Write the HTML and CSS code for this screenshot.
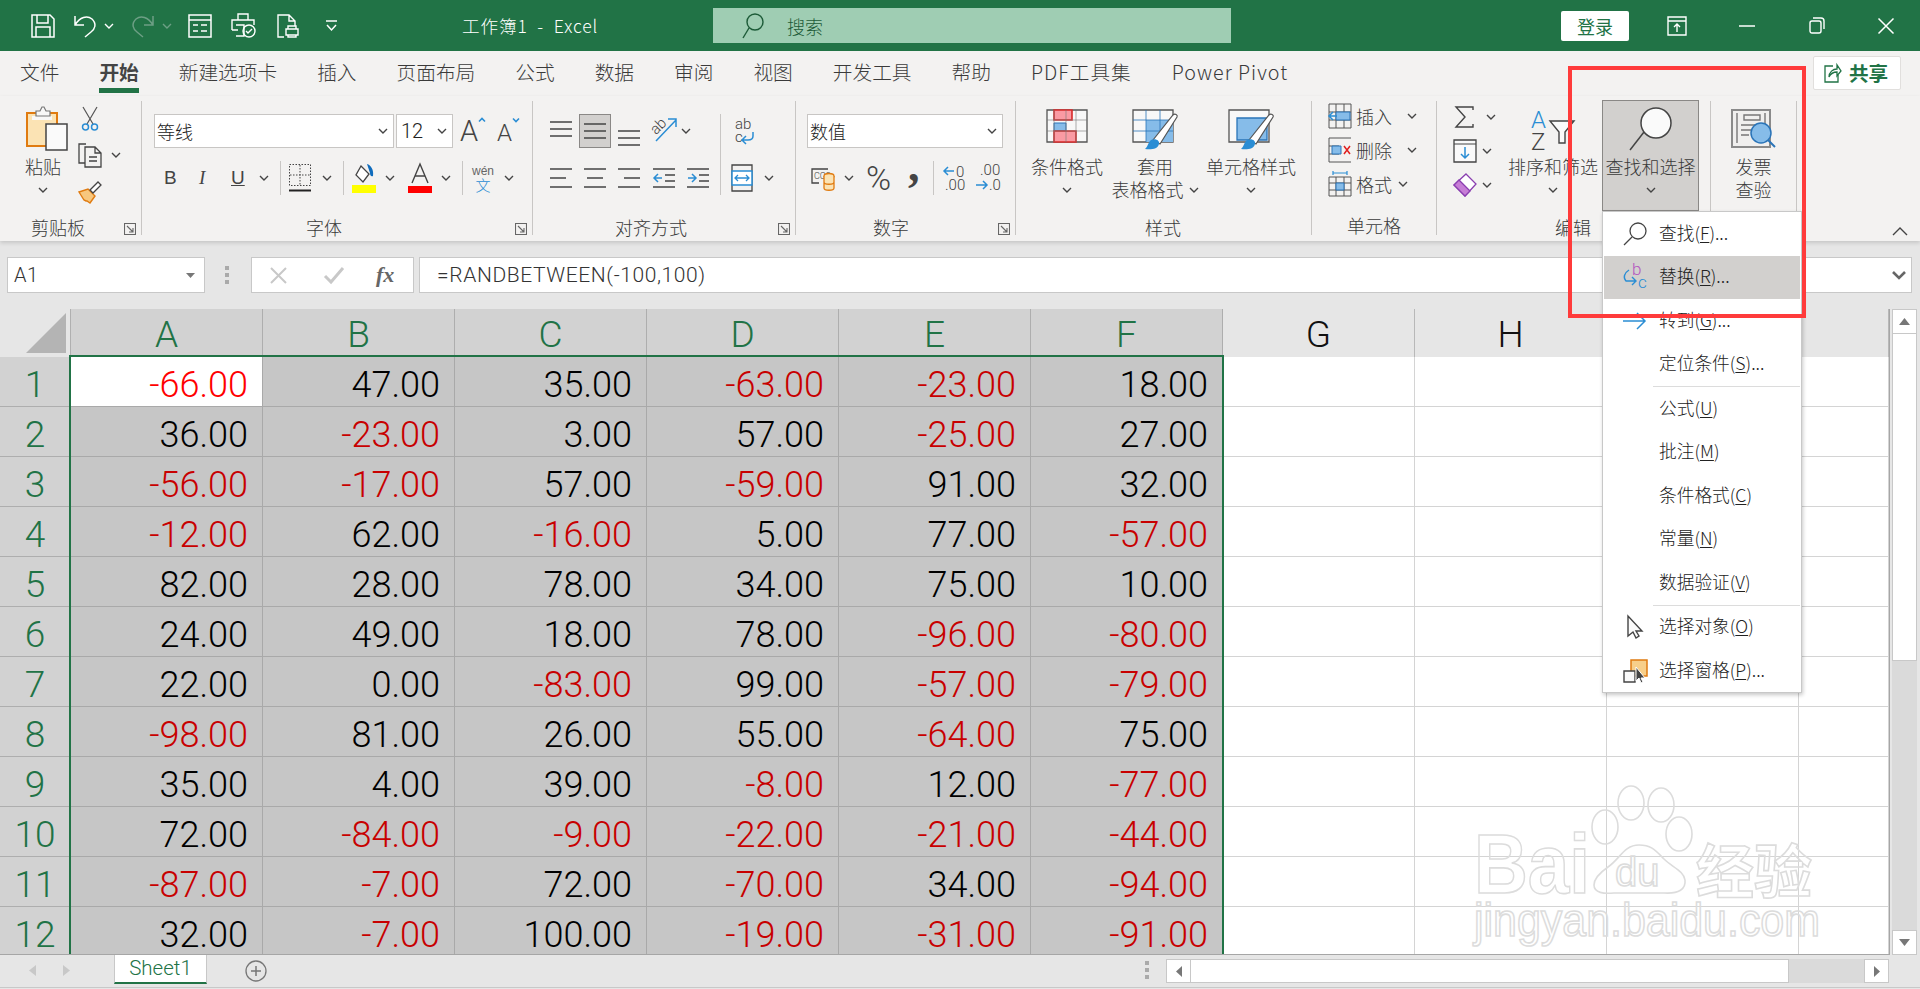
FILE: index.html
```html
<!DOCTYPE html>
<html lang="zh-CN">
<head>
<meta charset="utf-8">
<title>工作簿1 - Excel</title>
<link rel="stylesheet" href="styles.css">
</head>
<body>
<svg class="defs" width="0" height="0"><defs>
<symbol id="chev" viewBox="0 0 10 6"><path d="M1 1l4 4 4-4" fill="none" stroke="currentColor" stroke-width="1.4"/></symbol>
<symbol id="launch" viewBox="0 0 12 12"><path d="M.5 11.5V.5h11v11zM3 3l6 6M9 5v4H5" fill="none" stroke="#666" stroke-width="1.1"/></symbol>
</defs></svg>

<header class="titlebar">
  <div class="qat">
    <svg class="q-save" width="24" height="24" viewBox="0 0 24 24" fill="none" stroke="#fff" stroke-width="1.5"><path d="M1 1h18l4 4v18H1zM6 1v8h11V1M5 23V13h14v10"/></svg>
    <svg class="q-undo" width="24" height="24" viewBox="0 0 24 24" fill="none" stroke="#fff" stroke-width="1.5"><path d="M2 2v9h9M2 11C7 3 14 1 19 5c5 5 3 10-1 13l-6 5"/></svg>
    <svg class="c-w q-c1"><use href="#chev"/></svg>
    <svg class="q-redo" width="24" height="24" viewBox="0 0 24 24" fill="none" stroke="#6d9f85" stroke-width="1.5"><path d="M22 2v9h-9M22 11C17 3 10 1 5 5c-5 5-3 10 1 13l6 5"/></svg>
    <svg class="c-d q-c2"><use href="#chev"/></svg>
    <svg class="q-form" width="24" height="24" viewBox="0 0 24 24" fill="none" stroke="#fff" stroke-width="1.5"><path d="M1 1h22v22H1zM1 6h22M5 11h5M13 11h6M5 17h5M13 17h6"/></svg>
    <svg class="q-print" width="25" height="25" viewBox="0 0 25 25" fill="none" stroke="#fff" stroke-width="1.4"><path d="M7 7V1h10v6M1 17V7h22v5M7 17H1M5 12h8v11H5M9 14v0"/><circle cx="18" cy="18" r="6"/><path d="M15 18l2 2 4-4"/></svg>
    <svg class="q-prev" width="22" height="24" viewBox="0 0 22 24" fill="none" stroke="#fff" stroke-width="1.4"><path d="M7 23H1V1h11l6 6v5M12 1v6h6M9 15h12v6H9zM11 15v-3h8v3M11 21v2h8v-2"/></svg>
    <svg class="q-cust" width="11" height="14" viewBox="0 0 11 14" fill="none" stroke="#fff" stroke-width="1.5"><path d="M0 2h11"/><path d="M1 6l4.500 5L10 6"/></svg>
  </div>
  <div class="doc-title">工作簿1&nbsp; -&nbsp; Excel</div>
  <div class="search">
    <svg width="22" height="26" viewBox="0 0 22 26" fill="none" stroke="#1d5b38" stroke-width="1.4"><circle cx="13" cy="9" r="8"/><path d="M7 15L1 25"/></svg>
    <span>搜索</span>
  </div>
  <button class="login">登录</button>
  <svg class="w-disp" width="20" height="20" viewBox="0 0 20 20" fill="none" stroke="#fff" stroke-width="1.4"><path d="M1 1h18v18H1zM1 5h18M10 16v-8M7 11l3-3 3 3"/></svg>
  <svg class="w-min" width="16" height="2" viewBox="0 0 16 2"><path d="M0 1h16" stroke="#fff" stroke-width="1.5"/></svg>
  <svg class="w-res" width="16" height="17" viewBox="0 0 16 17" fill="none" stroke="#fff" stroke-width="1.4"><rect x="1" y="4" width="11" height="12" rx="2"/><path d="M4 1h8c2 0 3 1 3 3v8"/></svg>
  <svg class="w-close" width="16" height="16" viewBox="0 0 16 16"><path d="M.5.500l15 15M15.500.500l-15 15" stroke="#fff" stroke-width="1.5"/></svg>
</header>

<nav class="tabs">
  <a>文件</a><a class="on">开始</a><a>新建选项卡</a><a>插入</a><a>页面布局</a><a>公式</a><a>数据</a><a>审阅</a><a>视图</a><a>开发工具</a><a>帮助</a><a class="latin">PDF工具集</a><a class="latin">Power Pivot</a>
  <button class="share">
    <svg width="18" height="20" viewBox="0 0 18 20" fill="none" stroke="#217346" stroke-width="1.3"><path d="M9 3H1v16h13v-7"/><path d="M5 14c0-5 4-8 8-8V2l4 6-4 5V9c-3 0-6 1-8 5z"/></svg>
    共享
  </button>
</nav>

<section class="ribbon">
  <div class="group g-clip">
    <div class="body clip-body">
      <div class="big paste">
        <svg class="paste-i" width="42" height="44" viewBox="0 0 42 44"><path d="M1 7h30v33H1z" fill="#fbe3b4" stroke="#e07b10" stroke-width="2"/><path d="M6 10h20v4H6z" fill="#f8f8f8"/><path d="M10 7V5h4l2-4h2l2 4h4v5H10z" fill="#f8f8f8" stroke="#777" stroke-width="1.200"/><path d="M20 18h21v26H20z" fill="#fafafa" stroke="#444" stroke-width="1.500"/></svg>
        <span>粘贴</span>
        <svg class="cv"><use href="#chev"/></svg>
      </div>
      <div class="clip-col">
        <svg class="cut" width="16" height="24" viewBox="0 0 16 24" fill="none"><path d="M1 0l10 17M15 0L5 17" stroke="#555" stroke-width="1.200"/><circle cx="3.500" cy="20" r="3" stroke="#2a8dd4" stroke-width="1.500"/><circle cx="12.500" cy="20" r="3" stroke="#2a8dd4" stroke-width="1.500"/></svg>
        <div class="copy-row"><svg width="24" height="24" viewBox="0 0 24 24" fill="none" stroke="#444" stroke-width="1.300"><path d="M8 1H1v19h6"/><path d="M7 4h10l6 6v14H7zM17 4v6h6M11 14h8M11 18h8"/></svg><svg class="cv copy-c"><use href="#chev"/></svg></div>
        <svg class="brush" width="24" height="22" viewBox="0 0 24 22"><path d="M1 11l9-3 7 7-5 7-3-2-1 0-2-1z" fill="#f7c77e" stroke="#e07b10" stroke-width="1.400"/><path d="M12 9l8-8 3 3-8 8z" fill="#fff" stroke="#444" stroke-width="1.300"/></svg>
      </div>
    </div>
    <div class="foot"><span class="lbl l-clip">剪贴板</span><svg class="launch"><use href="#launch"/></svg></div>
  </div>

  <div class="group g-font">
    <div class="body rows pad-font">
      <div class="row">
        <div class="combo font-name"><span>等线</span><svg class="cv"><use href="#chev"/></svg></div>
        <div class="combo font-size"><span>12</span><svg class="cv"><use href="#chev"/></svg></div>
        <div class="grow-a"><span class="a-big">A</span><svg width="8" height="5" viewBox="0 0 8 5" fill="none" stroke="#2a8dd4" stroke-width="1.600"><path d="M1 4.500l3-3 3 3"/></svg></div>
        <div class="shrink-a"><span class="a-small">A</span><svg width="8" height="5" viewBox="0 0 8 5" fill="none" stroke="#2a8dd4" stroke-width="1.600"><path d="M1 .5l3 3 3-3"/></svg></div>
      </div>
      <div class="row">
        <b class="t-b">B</b><i class="t-i">I</i><u class="t-u">U</u>
        <svg class="cv m15"><use href="#chev"/></svg>
        <span class="sep m11"></span>
        <svg class="m8" width="22" height="28" viewBox="0 0 22 28" fill="none"><path d="M.5.500h21v21H.5zM11 1v20M1 11h20" stroke="#444" stroke-dasharray="1.500 1.500"/><path d="M0 26.500h22" stroke="#222" stroke-width="2"/></svg>
        <svg class="cv m11"><use href="#chev"/></svg>
        <span class="sep m11"></span>
        <svg class="m8" width="24" height="30" viewBox="0 0 24 30"><path d="M9 3l8 8-6 8-7-7z" fill="#fff" stroke="#444" stroke-width="1.300"/><path d="M15 1c4 1 7 6 6 12-2 1-3-1-3-3z" fill="#0f6cbd"/><path d="M0 22h24v8H0z" fill="#ffff00"/></svg>
        <svg class="cv m9"><use href="#chev"/></svg>
        <svg class="m13" width="24" height="30" viewBox="0 0 24 30"><path d="M4 20L12 1l8 19M7 13h10" fill="none" stroke="#444" stroke-width="1.400"/><path d="M0 23h24v7H0z" fill="#ff0000"/></svg>
        <svg class="cv m9"><use href="#chev"/></svg>
        <span class="sep m11"></span>
        <div class="wen m9"><span class="w1">wén</span><span class="w2">文</span></div>
        <svg class="cv m10"><use href="#chev"/></svg>
      </div>
    </div>
    <div class="foot"><span class="lbl l-font">字体</span><svg class="launch"><use href="#launch"/></svg></div>
  </div>

  <div class="group g-align">
    <div class="body rows pad-align">
      <div class="row">
        <svg width="22" height="20" viewBox="0 0 22 20"><path d="M0 1h22M0 8h22M0 15h22" stroke="#444" stroke-width="1.500"/></svg>
        <div class="mid-btn m7"><svg width="22" height="20" viewBox="0 0 22 20"><path d="M0 3h22M0 10h22M0 17h22" stroke="#444" stroke-width="1.500"/></svg></div>
        <svg class="m7 down6" width="22" height="20" viewBox="0 0 22 20"><path d="M0 5h22M0 12h22M0 19h22" stroke="#444" stroke-width="1.500"/></svg>
        <svg class="m12" width="25" height="28" viewBox="0 0 25 28" fill="none"><path d="M4 24L24 3M16 2h8v8" stroke="#2a8dd4" stroke-width="1.500"/><text class="svgtxt" x="0" y="15" transform="rotate(-45 6 12)">ab</text></svg>
        <svg class="cv m4"><use href="#chev"/></svg>
        <span class="sep tall m29"></span>
        <svg class="m14" width="20" height="28" viewBox="0 0 20 28" fill="none"><text class="svgtxt" x="0" y="12">ab</text><text class="svgtxt" x="0" y="25">c</text><path d="M18 15v4c0 3-2 4-5 4H8M11 19l-4 4 4 4" stroke="#2a8dd4" stroke-width="1.500"/></svg>
      </div>
      <div class="row">
        <svg width="22" height="24" viewBox="0 0 22 24"><path d="M0 3h22M0 12h16M0 21h22" stroke="#444" stroke-width="1.500"/></svg>
        <svg class="m12" width="22" height="24" viewBox="0 0 22 24"><path d="M0 3h22M3 12h16M0 21h22" stroke="#444" stroke-width="1.500"/></svg>
        <svg class="m12" width="22" height="24" viewBox="0 0 22 24"><path d="M0 3h22M6 12h16M0 21h22" stroke="#444" stroke-width="1.500"/></svg>
        <svg class="m13" width="22" height="24" viewBox="0 0 22 24" fill="none"><path d="M0 3h22M12 9h10M12 15h10M0 21h22" stroke="#444" stroke-width="1.500"/><path d="M9 12H1M5 8l-4 4 4 4" stroke="#2a8dd4" stroke-width="1.500"/></svg>
        <svg class="m12" width="22" height="24" viewBox="0 0 22 24" fill="none"><path d="M0 3h22M12 9h10M12 15h10M0 21h22" stroke="#444" stroke-width="1.500"/><path d="M1 12h8M5 8l4 4-4 4" stroke="#2a8dd4" stroke-width="1.500"/></svg>
        <svg class="m22" width="22" height="28" viewBox="0 0 22 28" fill="none"><path d="M1 1h20v26H1z" stroke="#444" stroke-width="1.300"/><path d="M1 7h20v14H1z" fill="#fff" stroke="#2a8dd4" stroke-width="1.500"/><path d="M4 14h14M7 11l-3 3 3 3M15 11l3 3-3 3" stroke="#2a8dd4" stroke-width="1.300"/></svg>
        <svg class="cv m11"><use href="#chev"/></svg>
      </div>
    </div>
    <div class="foot"><span class="lbl l-align">对齐方式</span><svg class="launch"><use href="#launch"/></svg></div>
  </div>

  <div class="group g-num">
    <div class="body rows pad-num">
      <div class="row"><div class="combo num-fmt"><span>数值</span><svg class="cv"><use href="#chev"/></svg></div></div>
      <div class="row acct-row">
        <svg width="24" height="26" viewBox="0 0 24 26" fill="none"><path d="M17 4H1v14h7" stroke="#444" stroke-width="1.300"/><text class="svgtxt tiny" x="3" y="14">CC3</text><ellipse cx="18" cy="11" rx="5" ry="2.500" fill="#fbe3b4" stroke="#e07b10" stroke-width="1.300"/><path d="M13 11v12c0 3 10 3 10 0V11M13 17c0 3 10 3 10 0" fill="#fbe3b4" stroke="#e07b10" stroke-width="1.300"/></svg>
        <svg class="cv m9"><use href="#chev"/></svg>
        <span class="pct">%</span>
        <span class="cma">,</span>
        <span class="sep m12"></span>
        <svg class="m8" width="23" height="28" viewBox="0 0 23 28" fill="none"><path d="M12 7H2M6 3L2 7l4 4" stroke="#2a8dd4" stroke-width="1.500"/><text class="svgtxt" x="14" y="13">0</text><text class="svgtxt" x="3" y="26">.00</text></svg>
        <svg class="m10" width="24" height="28" viewBox="0 0 24 28" fill="none"><text class="svgtxt" x="5" y="11">.00</text><path d="M1 21h11M8 17l4 4-4 4" stroke="#2a8dd4" stroke-width="1.500"/><text class="svgtxt" x="14" y="26">.0</text></svg>
      </div>
    </div>
    <div class="foot"><span class="lbl l-num">数字</span><svg class="launch"><use href="#launch"/></svg></div>
  </div>

  <div class="group g-style">
    <div class="body styles">
      <div class="big s1">
        <div class="ico"><svg width="42" height="34" viewBox="0 0 42 34"><path d="M1 1h40v32H1z" fill="#f8f8f8" stroke="#555" stroke-width="1.300"/><path d="M8 14h12v8H8z" fill="#86bce9" stroke="#2a74b8"/><path d="M8 1h18v10H8zM8 22h22v11H8z" fill="#fa9aa3" stroke="#d82a2a" stroke-width="1.600"/><path d="M8 1v32M20 1v32M30 1v32M1 11h40M1 22h40" stroke="#777" stroke-width=".6"/></svg></div>
        <span>条件格式</span><svg class="cv"><use href="#chev"/></svg>
      </div>
      <div class="big s2">
        <div class="ico"><svg width="46" height="46" viewBox="0 0 46 46"><path d="M1 1h40v32H1z" fill="#f8f8f8" stroke="#555" stroke-width="1.300"/><path d="M14 11h27v22H14z" fill="#86bce9"/><path d="M14 1v32M28 1v32M1 11h40M1 22h40" stroke="#2a74b8" stroke-width=".8"/><path d="M21 31L41 6c2-2 5 0 4 2L28 35z" fill="#fff" stroke="#555" stroke-width="1.200"/><path d="M19 31c5-2 9 1 8 4-1 5-8 6-14 5 3-2 3-7 6-9z" fill="#2a8dd4"/></svg></div>
        <span>套用</span>
        <span class="tline">表格格式<svg class="cv tc"><use href="#chev"/></svg></span>
      </div>
      <div class="big s3">
        <div class="ico"><svg width="46" height="46" viewBox="0 0 46 46"><path d="M1 1h40v32H1z" fill="#f8f8f8" stroke="#555" stroke-width="1.300"/><path d="M9 9h30v22H9z" fill="#86bce9" stroke="#2a74b8" stroke-width="1.300"/><path d="M21 31L41 6c2-2 5 0 4 2L28 35z" fill="#fff" stroke="#555" stroke-width="1.200"/><path d="M19 31c5-2 9 1 8 4-1 5-8 6-14 5 3-2 3-7 6-9z" fill="#2a8dd4"/></svg></div>
        <span>单元格样式</span><svg class="cv"><use href="#chev"/></svg>
      </div>
    </div>
    <div class="foot"><span class="lbl l-style">样式</span></div>
  </div>

  <div class="group g-cell">
    <div class="body cells">
      <div class="crow"><svg width="24" height="26" viewBox="0 0 24 26" fill="none"><path d="M1 1h22v24H1zM1 9h22M1 17h22M8 1v24M16 1v24" stroke="#555"/><path d="M8 9h14v8H8z" fill="#86bce9" stroke="#2a74b8"/><path d="M9 13H1M5 9l-4 4 4 4" stroke="#2a8dd4" stroke-width="1.500"/></svg><span>插入</span><svg class="cv m15"><use href="#chev"/></svg></div>
      <div class="crow"><svg width="24" height="26" viewBox="0 0 24 26" fill="none"><path d="M1 1h22M1 25h22M1 9h10M1 17h10M1 1v24" stroke="#555"/><path d="M4 9h9v8H4z" fill="#86bce9" stroke="#2a74b8"/><path d="M16 9l6 8M22 9l-6 8" stroke="#e02020" stroke-width="1.500"/></svg><span>删除</span><svg class="cv m15"><use href="#chev"/></svg></div>
      <div class="crow"><svg width="24" height="26" viewBox="0 0 24 26" fill="none"><path d="M1 6h22v19H1zM1 12h22M1 19h22M8 6v19M16 6v19" stroke="#555"/><path d="M8 12h8v7H8z" fill="#86bce9" stroke="#2a74b8"/><path d="M5 2h14M5 0v4M19 0v4" stroke="#2a8dd4" stroke-width="1.200"/></svg><span>格式</span><svg class="cv m6"><use href="#chev"/></svg></div>
    </div>
    <div class="foot"><span class="lbl l-cell">单元格</span></div>
  </div>

  <div class="group g-edit">
    <div class="body edit">
      <div class="edit-col">
        <div class="crow"><svg class="sigma" width="19" height="22" viewBox="0 0 19 22" fill="none"><path d="M18 4V1H1l9 10-9 10h17v-3" stroke="#444" stroke-width="1.400"/></svg><svg class="cv m12"><use href="#chev"/></svg></div>
        <div class="crow"><svg width="24" height="24" viewBox="0 0 24 24" fill="none"><path d="M1 1h22v22H1z" fill="#fafafa" stroke="#444" stroke-width="1.300"/><path d="M1 5h22" stroke="#444"/><path d="M12 8v11M8 15l4 4 4-4" stroke="#2a8dd4" stroke-width="1.500"/></svg><svg class="cv m5"><use href="#chev"/></svg></div>
        <div class="crow"><svg width="24" height="24" viewBox="0 0 24 24"><path d="M13 1l10 10-11 12L1 12z" fill="#fff" stroke="#8a3fb0" stroke-width="1.300"/><path d="M6 7l11 11-5 5L1 12z" fill="#c67ed6" stroke="#8a3fb0" stroke-width="1.300"/></svg><svg class="cv m5"><use href="#chev"/></svg></div>
      </div>
      <div class="big sort">
        <div class="ico"><svg width="44" height="42" viewBox="0 0 44 42" fill="none"><text class="az-a" x="0" y="19">A</text><text class="az-z" x="0" y="41">Z</text><path d="M19 12h24l-9 11v11h-6V23z" fill="#fafafa" stroke="#444" stroke-width="1.400"/></svg></div>
        <span>排序和筛选</span><svg class="cv"><use href="#chev"/></svg>
      </div>
      <div class="big find">
        <div class="ico"><svg width="44" height="46" viewBox="0 0 44 46" fill="none"><circle cx="27" cy="18" r="15" fill="#fafafa" stroke="#444" stroke-width="1.500"/><path d="M15 27L1 45" stroke="#444" stroke-width="1.500"/></svg></div>
        <span>查找和选择</span><svg class="cv"><use href="#chev"/></svg>
      </div>
    </div>
    <div class="foot"><span class="lbl l-edit">编辑</span></div>
  </div>

  <div class="group g-inv">
    <div class="body inv">
      <div class="big">
        <div class="ico"><svg width="46" height="40" viewBox="0 0 46 40" fill="none"><path d="M1 1h38v37H1z" fill="#f0efee" stroke="#8a8a8a" stroke-width="2"/><path d="M13 6h16v5H13zM6 4v30M34 4v12M10 16h14M10 21h10M10 26h8" stroke="#777" stroke-width="1.400"/><circle cx="30" cy="24" r="10" fill="#86bce9" stroke="#2a74b8" stroke-width="1.500"/><path d="M37 31l7 7" stroke="#2a74b8" stroke-width="2"/></svg></div>
        <span>发票</span><span>查验</span>
      </div>
    </div>
  </div>
  <svg class="collapse" width="16" height="9" viewBox="0 0 16 9" fill="none"><path d="M1 8l7-7 7 7" stroke="#444" stroke-width="1.400"/></svg>
</section>

<section class="fbar">
  <div class="namebox"><span>A1</span><svg width="9" height="5" viewBox="0 0 9 5"><path d="M0 0h9L4.500 5z" fill="#777"/></svg></div>
  <div class="dots"><i></i><i></i><i></i></div>
  <div class="fxbox">
    <svg width="17" height="17" viewBox="0 0 17 17"><path d="M1 1l15 15M16 1L1 16" stroke="#c8c8c8" stroke-width="2"/></svg>
    <svg width="20" height="16" viewBox="0 0 20 16"><path d="M1 9l6 6L19 1" fill="none" stroke="#c8c8c8" stroke-width="3"/></svg>
    <span class="fx"><i>f</i><i>x</i></span>
  </div>
  <div class="finput"><span>=RANDBETWEEN(-100,100)</span><svg width="14" height="9" viewBox="0 0 14 9"><path d="M1 1l6 6 6-6" fill="none" stroke="#666" stroke-width="2.600"/></svg></div>
</section>

<main class="sheet">
  <div class="grid-wrap">
    <div class="grid">
      <div class="corner"><svg width="40" height="40" viewBox="0 0 40 40"><path d="M40 0v40H0z" fill="#b4b4b4"/></svg></div>
      <div class="ch s">A</div><div class="ch s">B</div><div class="ch s">C</div><div class="ch s">D</div><div class="ch s">E</div><div class="ch s">F</div><div class="ch">G</div><div class="ch">H</div><div class="ch">I</div><div class="ch"></div>

      <div class="rh">1</div><div class="c active">-66.00</div><div class="c">47.00</div><div class="c">35.00</div><div class="c n">-63.00</div><div class="c n">-23.00</div><div class="c">18.00</div><div class="e"></div><div class="e"></div><div class="e"></div><div class="e"></div>
      <div class="rh">2</div><div class="c">36.00</div><div class="c n">-23.00</div><div class="c">3.00</div><div class="c">57.00</div><div class="c n">-25.00</div><div class="c">27.00</div><div class="e"></div><div class="e"></div><div class="e"></div><div class="e"></div>
      <div class="rh">3</div><div class="c n">-56.00</div><div class="c n">-17.00</div><div class="c">57.00</div><div class="c n">-59.00</div><div class="c">91.00</div><div class="c">32.00</div><div class="e"></div><div class="e"></div><div class="e"></div><div class="e"></div>
      <div class="rh">4</div><div class="c n">-12.00</div><div class="c">62.00</div><div class="c n">-16.00</div><div class="c">5.00</div><div class="c">77.00</div><div class="c n">-57.00</div><div class="e"></div><div class="e"></div><div class="e"></div><div class="e"></div>
      <div class="rh">5</div><div class="c">82.00</div><div class="c">28.00</div><div class="c">78.00</div><div class="c">34.00</div><div class="c">75.00</div><div class="c">10.00</div><div class="e"></div><div class="e"></div><div class="e"></div><div class="e"></div>
      <div class="rh">6</div><div class="c">24.00</div><div class="c">49.00</div><div class="c">18.00</div><div class="c">78.00</div><div class="c n">-96.00</div><div class="c n">-80.00</div><div class="e"></div><div class="e"></div><div class="e"></div><div class="e"></div>
      <div class="rh">7</div><div class="c">22.00</div><div class="c">0.00</div><div class="c n">-83.00</div><div class="c">99.00</div><div class="c n">-57.00</div><div class="c n">-79.00</div><div class="e"></div><div class="e"></div><div class="e"></div><div class="e"></div>
      <div class="rh">8</div><div class="c n">-98.00</div><div class="c">81.00</div><div class="c">26.00</div><div class="c">55.00</div><div class="c n">-64.00</div><div class="c">75.00</div><div class="e"></div><div class="e"></div><div class="e"></div><div class="e"></div>
      <div class="rh">9</div><div class="c">35.00</div><div class="c">4.00</div><div class="c">39.00</div><div class="c n">-8.00</div><div class="c">12.00</div><div class="c n">-77.00</div><div class="e"></div><div class="e"></div><div class="e"></div><div class="e"></div>
      <div class="rh">10</div><div class="c">72.00</div><div class="c n">-84.00</div><div class="c n">-9.00</div><div class="c n">-22.00</div><div class="c n">-21.00</div><div class="c n">-44.00</div><div class="e"></div><div class="e"></div><div class="e"></div><div class="e"></div>
      <div class="rh">11</div><div class="c n">-87.00</div><div class="c n">-7.00</div><div class="c">72.00</div><div class="c n">-70.00</div><div class="c">34.00</div><div class="c n">-94.00</div><div class="e"></div><div class="e"></div><div class="e"></div><div class="e"></div>
      <div class="rh">12</div><div class="c">32.00</div><div class="c n">-7.00</div><div class="c">100.00</div><div class="c n">-19.00</div><div class="c n">-31.00</div><div class="c n">-91.00</div><div class="e"></div><div class="e"></div><div class="e"></div><div class="e"></div>
    </div>
    <div class="sel-frame"></div>
    <svg class="wm" width="350" height="170" viewBox="0 0 350 170">
      <g class="wm-s">
        <ellipse cx="131" cy="42" rx="13" ry="17"/><ellipse cx="157" cy="18" rx="13" ry="17"/><ellipse cx="187" cy="20" rx="13" ry="17"/><ellipse cx="205" cy="49" rx="13" ry="17"/>
        <path d="M165 60C150 60 146 74 134 82C124 89 120 94 120 100C120 108 130 109 140 108L190 108C205 109 212 104 211 95C210 86 198 82 190 74C182 66 178 60 165 60Z"/>
        <text class="wm-b" x="0" y="108" textLength="116" lengthAdjust="spacingAndGlyphs">Bai</text>
        <text class="wm-d" x="141" y="101">du</text>
        <text class="wm-c" x="222" y="108">经验</text>
        <text class="wm-u" x="0" y="151" textLength="346" lengthAdjust="spacingAndGlyphs">jingyan.baidu.com</text>
      </g>
    </svg>
  </div>
  <aside class="vscroll">
    <div class="vbtn"><svg width="11" height="7" viewBox="0 0 11 7"><path d="M0 7h11L5.500 0z" fill="#777"/></svg></div>
    <div class="vthumb"></div>
    <div class="vtrack"></div>
    <div class="vbtn"><svg width="11" height="7" viewBox="0 0 11 7"><path d="M0 0h11L5.500 7z" fill="#777"/></svg></div>
  </aside>
</main>

<footer class="bottombar">
  <svg class="nav-l" width="7" height="11" viewBox="0 0 7 11"><path d="M7 0v11L0 5.500z" fill="#c8c8c8"/></svg>
  <svg class="nav-r" width="7" height="11" viewBox="0 0 7 11"><path d="M0 0v11l7-5.500z" fill="#c8c8c8"/></svg>
  <div class="sheet-tab">Sheet1</div>
  <svg class="add" width="22" height="22" viewBox="0 0 22 22" fill="none" stroke="#777"><circle cx="11" cy="11" r="10" stroke-width="1.300"/><path d="M11 6v10M6 11h10" stroke-width="1.500"/></svg>
  <div class="dots hdots"><i></i><i></i><i></i></div>
  <div class="hscroll">
    <div class="hbtn"><svg width="6" height="11" viewBox="0 0 6 11"><path d="M6 0v11L0 5.500z" fill="#777"/></svg></div>
    <div class="hthumb"></div>
    <div class="htrack"></div>
    <div class="hbtn"><svg width="6" height="11" viewBox="0 0 6 11"><path d="M0 0v11l6-5.500z" fill="#777"/></svg></div>
  </div>
</footer>

<div class="menu">
  <div class="mi"><span class="mic"><svg width="24" height="24" viewBox="0 0 24 24" fill="none" stroke="#444" stroke-width="1.300"><circle cx="15" cy="9" r="8"/><path d="M9 15L1 23"/></svg></span>查找(<u>F</u>)...</div>
  <div class="mi hot"><span class="mic"><svg width="24" height="26" viewBox="0 0 24 26" fill="none"><text class="rb" x="9" y="11">b</text><text class="rc" x="15" y="24">c</text><path d="M6 6C1 9 0 14 3 17h9M9 13l4 4-4 4" stroke="#2a8dd4" stroke-width="1.400"/></svg></span>替换(<u>R</u>)...</div>
  <div class="mi"><span class="mic"><svg width="24" height="18" viewBox="0 0 24 18" fill="none" stroke="#2a8dd4" stroke-width="1.500"><path d="M0 9h22M14 1l8 8-8 8"/></svg></span>转到(<u>G</u>)...</div>
  <div class="mi"><span class="mic"></span>定位条件(<u>S</u>)...</div>
  <div class="msep"></div>
  <div class="mi"><span class="mic"></span>公式(<u>U</u>)</div>
  <div class="mi"><span class="mic"></span>批注(<u>M</u>)</div>
  <div class="mi"><span class="mic"></span>条件格式(<u>C</u>)</div>
  <div class="mi"><span class="mic"></span>常量(<u>N</u>)</div>
  <div class="mi"><span class="mic"></span>数据验证(<u>V</u>)</div>
  <div class="msep"></div>
  <div class="mi"><span class="mic"><svg width="16" height="24" viewBox="0 0 16 24" fill="#fafafa" stroke="#444" stroke-width="1.400"><path d="M1 1v20l5-4 3 6 3-2-3-5h6z"/></svg></span>选择对象(<u>O</u>)</div>
  <div class="mi"><span class="mic"><svg width="24" height="24" viewBox="0 0 24 24"><path d="M8 1h16v16H8z" fill="#f7cf8a" stroke="#e07b10" stroke-width="1.500"/><path d="M1 12h11v11H1z" fill="#fafafa" stroke="#444" stroke-width="1.400"/><path d="M13 8v14l3-3 2 5 2-1-2-4h4z" fill="#444" stroke="#fff"/></svg></span>选择窗格(<u>P</u>)...</div>
</div>
<div class="redbox"></div>
</body>
</html>
```

FILE: styles.css
```css
* { box-sizing: border-box; }
html, body { margin: 0; padding: 0; width: 1920px; height: 989px; overflow: hidden; }
body { position: relative; background: #e6e6e6; font-family: "Noto Sans CJK SC", "Liberation Sans", sans-serif; color: #3a3a3a; font-weight: 300; }
.defs { position: absolute; }
svg { display: block; flex: none; overflow: visible; }
button { font: inherit; border: 0; padding: 0; }

/* chevrons */
.cv, .c-w, .c-d { width: 10px; height: 6px; color: #444; }
.c-w { color: #fff; }
.c-d { color: #6d9f85; }

/* title bar */
.titlebar { height: 51px; background: #217346; display: flex; align-items: center; color: #fff; }
.qat { display: flex; align-items: center; width: 462px; padding-left: 31px; }
.q-undo { margin-left: 18px; }
.q-c1 { margin-left: 7px; }
.q-redo { margin-left: 17px; }
.q-c2 { margin-left: 7px; }
.q-form { margin-left: 16px; }
.q-print { margin-left: 19px; }
.q-prev { margin-left: 21px; }
.q-cust { margin-left: 27px; }
.doc-title { width: 251px; font-size: 17.6px; white-space: nowrap; letter-spacing: .9px; }
.search { width: 518px; height: 35px; background: #9fcdb3; display: flex; align-items: center; padding-left: 29px; color: #1d5b38; font-size: 18px; }
.search span { margin-left: 23px; }
.login { margin-left: 330px; width: 68px; height: 30px; background: #fff; color: #217346; border-radius: 2px; font-size: 18px; font-weight: 400; }
.w-disp { margin-left: 38px; }
.w-min { margin-left: 52px; }
.w-res { margin-left: 54px; }
.w-close { margin-left: 53px; }

/* tabs */
.tabs { height: 45px; background: #f3f2f1; display: flex; align-items: flex-start; gap: 40px; padding: 4px 0 0 20px; font-size: 19.7px; position: relative; }
.tabs a { height: 38px; line-height: 34px; white-space: nowrap; }
.tabs a.on { font-weight: 700; border-bottom: 5px solid #217346; height: 38px; color: #444; }
.tabs a.latin { letter-spacing: 1px; }
.share { margin-left: auto; margin-top: 1px; margin-right: 19px; width: 88px; height: 34px; background: #fff; border: 1px solid #e1dfdd; border-radius: 2px; color: #217346; font-weight: 700; font-size: 19.6px; display: flex; align-items: center; justify-content: flex-start; padding-left: 10px; gap: 7px; white-space: nowrap; line-height: 1; }

/* ribbon */
.ribbon { height: 145px; background: #f3f2f1; display: flex; align-items: flex-start; padding-top: 5px; position: relative; box-shadow: 0 2px 4px rgba(0,0,0,.14); font-size: 18px; z-index: 1; }
.group { height: 134px; border-right: 1px solid #c8c6c4; flex: none; display: flex; flex-direction: column; }
.g-clip { width: 142px; }
.g-font { width: 391px; }
.g-align { width: 263px; }
.g-num { width: 220px; }
.g-style { width: 296px; }
.g-cell { width: 125px; }
.g-edit { width: 274px; }
.g-inv { width: 86px; }
.body { height: 117px; display: flex; }
.foot { height: 17px; display: flex; align-items: center; font-size: 18px; line-height: 20px; white-space: nowrap; }
.launch { width: 12px; height: 12px; margin-left: auto; margin-right: 5px; margin-top: 5px; }
.l-clip { margin-left: 31px; }
.l-font { margin-left: 164px; }
.l-align { margin-left: 82px; }
.l-num { margin-left: 77px; }
.l-style { margin-left: 129px; }
.l-cell { margin-left: 35px; }
.l-edit { margin-left: 118px; }

.big { display: flex; flex-direction: column; align-items: center; line-height: 23px; white-space: nowrap; padding-top: 8px; flex: none; }
.big .ico { height: 46px; display: flex; justify-content: center; }
.big .cv { margin-top: 9px; }
.tline { display: flex; align-items: center; }
.big .tc { margin: 0 0 0 5px; }

.clip-body { padding-left: 26px; }
.paste { padding-top: 5px; width: 34px; }
.paste-i { margin-bottom: 5px; align-self: flex-start; }
.clip-col { margin-left: 18px; display: flex; flex-direction: column; align-items: flex-start; padding-top: 6px; }
.cut { margin-left: 4px; }
.copy-row { display: flex; align-items: center; margin-top: 12px; }
.copy-c { margin-left: 9px; }
.brush { margin-top: 14px; }

.rows { flex-direction: column; padding-top: 13px; gap: 13px; }
.row { height: 34px; display: flex; align-items: center; }
.pad-font { padding-left: 12px; }
.pad-font .row:last-child { padding-left: 10px; }
.pad-align { padding-left: 17px; }
.pad-num { padding-left: 11px; }
.acct-row { padding-left: 4px; }

.combo { height: 34px; background: #fff; border: 1px solid #c8c6c4; display: flex; align-items: center; justify-content: space-between; padding: 0 5px 0 2px; color: #222; font-size: 18px; flex: none; }
.font-name { width: 240px; }
.font-size { width: 57px; margin-left: 2px; padding-left: 4px; font-family: "Roboto", sans-serif; font-size: 20px; }
.num-fmt { width: 196px; }
.grow-a { display: flex; align-items: flex-start; margin-left: 7px; width: 23px; }
.shrink-a { display: flex; align-items: flex-start; margin-left: 14px; width: 21px; }
.a-big, .a-small { font-family: "Roboto", sans-serif; line-height: 1; color: #444; }
.a-big { font-size: 29px; }
.a-small { font-size: 24px; margin-top: 3px; }
.t-b, .t-i, .t-u { font-family: "Liberation Sans", sans-serif; font-size: 19px; color: #444; }
.t-b { width: 12px; }
.t-i { margin-left: 23px; width: 10px; font-family: "Liberation Serif", serif; }
.t-u { margin-left: 22px; width: 13px; }
.sep { width: 1px; height: 34px; background: #c8c6c4; flex: none; }
.tall { height: 81px; align-self: flex-start; }
.wen { width: 22px; text-align: center; display: flex; flex-direction: column; align-items: center; line-height: 1; }
.w1 { font-family: "Liberation Sans", sans-serif; font-size: 12px; color: #666; }
.w2 { font-size: 15px; color: #2a8dd4; }
.mid-btn { width: 32px; height: 34px; background: #d2d0ce; border: 1px solid #8a8886; display: flex; align-items: center; justify-content: center; }
.down6 { position: relative; top: 5px; }
.m4 { margin-left: 4px; } .m5 { margin-left: 5px; } .m6 { margin-left: 6px; } .m7 { margin-left: 7px; } .m8 { margin-left: 8px; } .m9 { margin-left: 9px; } .m10 { margin-left: 10px; } .m11 { margin-left: 11px; } .m12 { margin-left: 12px; } .m13 { margin-left: 13px; } .m14 { margin-left: 14px; } .m15 { margin-left: 15px; } .m22 { margin-left: 22px; } .m29 { margin-left: 29px; }
.svgtxt { font-family: "Roboto", sans-serif; font-size: 15px; fill: #444; stroke: none; }
.tiny { font-size: 9px; }
.pct { margin-left: 12px; width: 26px; font-family: "Roboto", sans-serif; font-size: 34px; font-weight: 300; line-height: 1; color: #444; }
.cma { margin-left: 16px; width: 13px; font-family: "Liberation Serif", serif; font-weight: 700; font-size: 46px; line-height: 1; color: #444; position: relative; top: -12px; }

.styles { padding-left: 9px; }
.s1 { width: 84px; }
.s2 { width: 92px; }
.s3 { width: 100px; }
.cells { flex-direction: column; gap: 1px; padding-left: 16px; margin-top: -2px; }
.crow { height: 33px; display: flex; align-items: center; white-space: nowrap; }
.crow span { margin-left: 4px; }
.edit { padding-left: 16px; }
.edit-col { width: 53px; display: flex; flex-direction: column; gap: 1px; margin-top: -1px; }
.sigma { margin-left: 2px; }
.sort { width: 94px; }
.find { width: 97px; height: 111px; margin-left: 2px; margin-top: -1px; background: #d2d0ce; border: 1px solid #8a8886; padding-top: 4px; }
.find .ico { height: 50px; }
.az-a { font-family: "Roboto", sans-serif; font-size: 24px; fill: #2a8dd4; stroke: none; }
.az-z { font-family: "Roboto", sans-serif; font-size: 24px; fill: #444; stroke: none; }
.inv { justify-content: center; }
.collapse { position: absolute; left: 1892px; top: 131px; }

/* formula bar */
.fbar { height: 68px; padding: 16px 8px 0 7px; display: flex; align-items: flex-start; background: #e6e6e6; }
.namebox { width: 198px; height: 36px; background: #fff; border: 1px solid #c8c8c8; display: flex; align-items: center; justify-content: space-between; padding: 0 9px 0 6px; font-family: "Roboto", sans-serif; font-size: 20px; font-weight: 300; letter-spacing: .5px; color: #333; }
.dots { width: 4px; margin-left: 20px; height: 36px; display: flex; flex-direction: column; justify-content: center; gap: 3px; }
.dots i { display: block; width: 4px; height: 4px; background: #aaa; }
.fxbox { margin-left: 22px; width: 163px; height: 36px; background: #fff; border: 1px solid #c8c8c8; display: flex; align-items: center; padding-left: 18px; }
.fxbox svg + svg { margin-left: 37px; }
.fx { margin-left: 32px; font-family: "Liberation Serif", serif; font-size: 22px; font-weight: 700; color: #666; }
.finput { margin-left: 5px; width: 1493px; height: 36px; background: #fff; border: 1px solid #c8c8c8; display: flex; align-items: center; justify-content: space-between; padding: 0 5px 0 17px; font-family: "Roboto", sans-serif; font-size: 21px; font-weight: 300; letter-spacing: .6px; color: #333; }

/* sheet */
.sheet { height: 646px; display: flex; align-items: flex-start; }
.grid-wrap { position: relative; width: 1890px; height: 646px; overflow: hidden; border-right: 1px solid #a6a6a6; border-bottom: 1px solid #a6a6a6; }
.grid { display: grid; grid-template-columns: 71px repeat(9, 192px) 90px; grid-template-rows: 48px repeat(12, 50px); font-family: "Roboto", sans-serif; font-weight: 300; }
.corner { background: #e6e6e6; border-right: 1px solid #b0b0b0; display: flex; justify-content: flex-end; padding: 4px 4px 0 0; }
.ch { background: #e6e6e6; border-right: 1px solid #b8b8b8; display: flex; justify-content: center; align-items: center; font-size: 37px; color: #111; padding-top: 2px; }
.ch.s { background: #d2d2d2; color: #217346; border-right-color: #aeaeae; }
.rh { background: #d2d2d2; border-bottom: 1px solid #aeaeae; color: #217346; font-size: 37px; display: flex; justify-content: center; align-items: center; padding: 5px 1px 0 0; }
.c { background: #c6c6c6; border-right: 1px solid #a9a9a9; border-bottom: 1px solid #a9a9a9; color: #000; font-size: 36px; text-align: right; padding: 6px 14px 0 0; line-height: 44px; }
.c.n { color: #c80000; }
.c.active { background: #fff; color: #ff0000; }
.e { background: #fff; border-right: 1px solid #d4d4d4; border-bottom: 1px solid #d4d4d4; }
.sel-frame { position: absolute; left: 69px; top: 46px; width: 1155px; height: 700px; border: 2px solid #217346; pointer-events: none; }
.wm { position: absolute; left: 1474px; top: 476px; }
.wm-s { fill: none; stroke: #dcdcdc; stroke-width: 1.600; }
.wm-b { font-family: "Liberation Sans", sans-serif; font-weight: 700; font-size: 84px; }
.wm-d { font-family: "Liberation Sans", sans-serif; font-size: 40px; }
.wm-c { font-family: "Noto Sans CJK SC", sans-serif; font-weight: 700; font-size: 58px; }
.wm-u { font-family: "Liberation Sans", sans-serif; font-size: 46px; }

.vscroll { margin-left: 2px; width: 25px; height: 646px; display: flex; flex-direction: column; }
.vbtn { height: 25px; background: #fff; border: 1px solid #c8c8c8; display: flex; align-items: center; justify-content: center; flex: none; }
.vthumb { height: 327px; background: #fff; border: 1px solid #c8c8c8; border-top: 0; flex: none; }
.vtrack { flex: 1; background: #dadada; }

/* bottom bar */
.bottombar { height: 33px; border-bottom: 1px solid #c8c8c8; display: flex; align-items: flex-start; background: #e6e6e6; }
.nav-l { margin: 10px 0 0 29px; }
.nav-r { margin: 10px 0 0 27px; }
.sheet-tab { margin-left: 44px; width: 93px; height: 29px; background: #fff; border: 1px solid #c8c8c8; border-top: 0; border-bottom: 2px solid #217346; color: #217346; font-family: "Roboto", sans-serif; font-size: 20.5px; text-align: center; line-height: 26px; }
.add { margin: 5px 0 0 38px; }
.hdots { margin: 0 0 0 878px; height: 30px; }
.hscroll { margin: 4px 0 0 17px; width: 723px; height: 24px; display: flex; }
.hbtn { width: 25px; background: #fff; border: 1px solid #c8c8c8; display: flex; align-items: center; justify-content: center; flex: none; }
.hthumb { width: 598px; background: #fff; border: 1px solid #c8c8c8; border-left: 0; }
.htrack { flex: 1; background: #dadada; }

/* menu */
.menu { position: absolute; left: 1602px; top: 211px; width: 200px; height: 482px; background: #fff; border: 1px solid #c8c8c8; box-shadow: 1px 2px 4px rgba(0,0,0,.22); padding: 0 1px; z-index: 3; font-size: 17.7px; color: #222; }
.mi { height: 43.5px; display: flex; align-items: center; white-space: nowrap; line-height: 1; padding-bottom: 2px; }
.mi u { text-underline-offset: 2px; }
.mi.hot { background: #d2d0ce; }
.mic { width: 55px; flex: none; display: flex; justify-content: center; padding-left: 7px; margin-top: 2px; }
.msep { height: 1px; margin: 0 0 0 49px; background: #dcdcdc; }
.rb, .rc { font-family: "Roboto", sans-serif; font-size: 17px; stroke: none; }
.rb { fill: #b456c0; }
.rc { fill: #2a8dd4; }
.redbox { position: absolute; left: 1568px; top: 66px; width: 238px; height: 252px; border: 4px solid #ff3b3b; z-index: 4; pointer-events: none; }
```
